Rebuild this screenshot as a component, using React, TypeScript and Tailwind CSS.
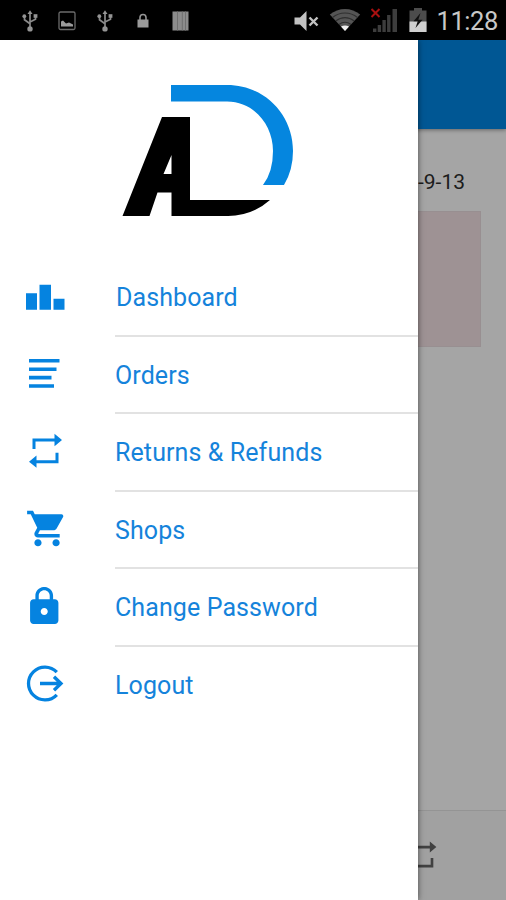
import type { ReactNode } from 'react';

const ROBOTO = "font-['Roboto','Liberation_Sans',sans-serif]";

function UsbIcon() {
  return (
    <svg width="16" height="22" viewBox="0 0 16 22" fill="none" stroke="#8a8a8a" strokeWidth="1.7">
      <path d="M8 3v15M2.5 6.5v3.2L8 13.8M13.5 6v3.2L8 12" />
      <path d="M8 .2l2.500 3.800h-5z" fill="#949494" stroke="none" />
      <circle cx="8" cy="18.9" r="2.700" fill="#949494" stroke="none" />
      <circle cx="2.300" cy="6.200" r="1.900" fill="#949494" stroke="none" />
      <path d="M11.600 4.200h3.800v3.600h-3.800z" fill="#949494" stroke="none" />
    </svg>
  );
}

function StatusBar() {
  return (
    <header className="flex h-10 items-center justify-between bg-black">
      <div className="flex items-center pt-[2px] pl-[21.5px]">
        <UsbIcon />
        <svg className="ml-5" width="18" height="20" viewBox="0 0 18 20">
          <rect x="1" y="1" width="16" height="17.500" rx="1.500" fill="none" stroke="#6b6b6b" strokeWidth="1.300" />
          <path d="M3 15.500v-5l2-1 3 3 3-1 4 2v2z" fill="#9b9b9b" />
        </svg>
        <div className="ml-[21px]">
          <UsbIcon />
        </div>
        <svg className="ml-6" width="12" height="16" viewBox="0 0 12 16">
          <path d="M3 7V4.500a3 3 0 0 1 6 0V7" fill="none" stroke="#949494" strokeWidth="1.600" />
          <rect x=".5" y="6.500" width="11" height="8" fill="#9b9b9b" />
        </svg>
        <svg className="ml-[23px]" width="17" height="20" viewBox="0 0 17 20">
          <rect x="0.500" y="0.500" width="16" height="19" fill="#8c8c8c" />
          <path d="M5.500 .5v19M10.300 .5v19M13.500 .5v19" stroke="#707070" strokeWidth="1" />
        </svg>
      </div>
      <div className="flex items-center pr-2">
        <svg className="mt-0.5" width="26" height="22" viewBox="0 0 26 22">
          <path d="M.5 7.500H6L12.500 1v20L6 14.500H.5z" fill="#c2c2c2" />
          <path d="M15.500 7.500l8 8M23.500 7.500l-8 8" stroke="#c2c2c2" strokeWidth="2.400" />
        </svg>
        <svg className="ml-[9px]" width="32" height="24" viewBox="0 0 32 24">
          <path d="M.8 6.500C9.500-1 22.500-1 31.200 6.500L16 23z" fill="#555" />
          <path
            d="M3.500 9.500c7.500-6 17.500-6 25 0M6.800 13c5.500-4.500 12.900-4.500 18.400 0M10 16.500c3.800-2.800 8.200-2.800 12 0"
            fill="none"
            stroke="#303030"
            strokeWidth="1.100"
          />
          <path d="M12 18.600q4-2.200 8 0L16 23z" fill="#eee" />
        </svg>
        <svg className="ml-[9px]" width="28" height="26" viewBox="0 0 28 26">
          <path d="M3 21.500h3.400V25H3zM7.700 18h3.400v7H7.700zM12.400 13h3.400v12h-3.400zM17.100 8h3.400v17h-3.400zM22.500 2H27v23h-4.500z" fill="#3d3d3d" />
          <path d="M1.500 2l8 8M9.500 2l-8 8" stroke="#a91010" strokeWidth="2" />
        </svg>
        <svg className="ml-[11px]" width="18" height="26" viewBox="0 0 18 26">
          <path d="M5 1h8v2.500h4.500V25H.5V3.500H5z" fill="#4c4c4c" />
          <path d="M.5 14.500h17V25H.5z" fill="#d0d0d0" />
          <path d="M11.500 6L4.500 14.200h4.200L6.500 21l7-8.200H9.300z" fill="#111" />
        </svg>
        <span className="ml-[9px] pt-[2px] text-[25.500px] leading-[38px] tracking-[-0.400px] text-[#c8c8c8]">11:28</span>
      </div>
    </header>
  );
}

function Logo() {
  return (
    <svg className="ml-[110px]" width="200" height="190" viewBox="0 0 200 190">
      <path d="M61 25h56C155 25 183 55 183 91q0 19-9 34h-21q10-13 10-34C163 65 144 41.500 117 41.500H61z" fill="#0586df" />
      <path d="M52 57h28v83h80q-18 16-42 16H61.500v-23.500H47.500L39.500 156H12.500zM61.500 95L53.500 114h8z" fill="#000" fillRule="evenodd" />
    </svg>
  );
}

const items: { label: string; icon: ReactNode }[] = [
  {
    label: 'Dashboard',
    icon: <path d="M1 16.250h11v16.500H1zM14.500 7.750H26v25H14.500zM28.500 21.750h11v11h-11z" />,
  },
  {
    label: 'Orders',
    icon: <path d="M4 4.900h30.500v3.600H4zM4 13.400h27.500V17H4zM4 21.800h22.500v3.600H4zM4 30.200h25v3.600H4z" />,
  },
  {
    label: 'Returns & Refunds',
    icon: (
      <path d="M7.500 6.600h22V1.800L37 8l-7.500 6.200V9.600h-19v7.500h-3zM33.500 20.700v10.600h-22v4.500L4 29.700l7.500-6.200v4.800h19v-7.600z" />
    ),
  },
  {
    label: 'Shops',
    icon: (
      <path
        transform="translate(.3 -1.800) scale(1.810 1.780)"
        d="M7 18c-1.100 0-1.990.9-1.990 2S5.900 22 7 22s2-.9 2-2-.9-2-2-2zM1 2v2h2l3.600 7.590-1.350 2.450c-.16.28-.25.61-.25.960 0 1.100.9 2 2 2h12v-2H7.420c-.14 0-.25-.11-.25-.25l.03-.12.9-1.630h7.450c.75 0 1.410-.41 1.750-1.030l3.580-6.490A1.003 1.003 0 0 0 20 4H5.210l-.94-2H1zm16 16c-1.100 0-1.990.9-1.990 2s.89 2 1.990 2 2-.9 2-2-.9-2-2-2z"
      />
    ),
  },
  {
    label: 'Change Password',
    icon: (
      <path
        transform="translate(-2 -1.800) scale(1.770 1.760)"
        d="M18 8h-1V6c0-2.760-2.240-5-5-5S7 3.240 7 6v2H6c-1.100 0-2 .9-2 2v10c0 1.100.9 2 2 2h12c1.100 0 2-.9 2-2V10c0-1.100-.9-2-2-2zm-6 9c-1.100 0-2-.9-2-2s.9-2 2-2 2 .9 2 2-.9 2-2 2zm3.100-9H8.900V6c0-1.710 1.390-3.100 3.100-3.100 1.710 0 3.100 1.390 3.100 3.100v2z"
      />
    ),
  },
  {
    label: 'Logout',
    icon: (
      <path
        d="M31.800 8.200a16.400 16.400 0 1 0 0 22.600M15 19.500h20.500M29 12.700l7 6.800-7 6.800"
        fill="none"
        stroke="currentColor"
        strokeWidth="3.300"
      />
    ),
  },
];

function Drawer() {
  return (
    <aside className="absolute inset-y-0 left-0 w-[418px] bg-white pt-5 shadow-[0_0_6px_rgba(0,0,0,0.55)]">
      <Logo />
      <nav className="mt-[9px] text-[#0583e0]">
        {items.map(({ label, icon }, i) => (
          <a key={label} className="flex h-[77.5px] items-center pl-[25px]">
            <svg className="mb-[2px]" width="40" height="40" viewBox="0 0 40 40" fill="currentColor">
              {icon}
            </svg>
            <span
              className={`ml-[50px] flex h-full flex-1 items-center border-b-2 pt-[2px] text-[25px] tracking-[0.1px] text-[#1583db] ${
                i < items.length - 1 ? 'border-[#e2e2e2]' : 'border-transparent'
              } ${i === 0 ? 'pl-px' : ''}`}
            >
              {label}
            </span>
          </a>
        ))}
      </nav>
    </aside>
  );
}

export default function App() {
  return (
    <div className={`flex h-[900px] w-[506px] flex-col overflow-hidden bg-black ${ROBOTO}`}>
      <StatusBar />
      <div className="relative flex flex-1 flex-col overflow-hidden bg-[#a5a5a5]">
        <div className="h-[89px] shrink-0 bg-[#005794] shadow-[0_1px_4px_rgba(0,0,0,0.4)]" />
        <main className="flex flex-1 flex-col items-end">
          <p className="mt-[37px] pr-[41px] text-[21px] leading-8 text-[#1c1c1c]">-9-13</p>
          <div className="mt-[13px] mr-[25px] h-[136px] w-[456px] border border-[#988f91] bg-[#9e9294]" />
        </main>
        <footer className="flex h-[90px] shrink-0 items-center justify-end border-t border-[#949494] bg-[#a1a1a1] pt-[3px] pr-[67px]">
          <svg width="35" height="35" viewBox="0 0 40 40" fill="#414141">
            {items[2].icon}
          </svg>
        </footer>
        <Drawer />
      </div>
    </div>
  );
}
